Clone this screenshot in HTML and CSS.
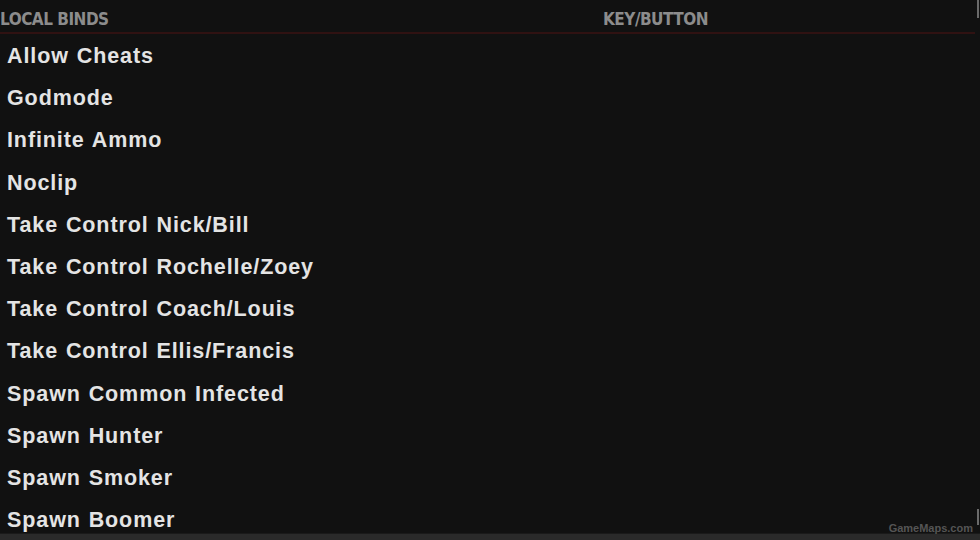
FILE: index.html
```
<!DOCTYPE html>
<html lang="en">
<head>
    <meta charset="UTF-8">
    <title>Local Binds</title>
    <link rel="stylesheet" href="styles.css">
</head>
<body>
    <div class="panel">
        <div class="list">
            <div class="head">
                <span class="col-name">LOCAL BINDS</span>
                <span class="col-key">KEY/BUTTON</span>
            </div>
            <ul class="binds">
                <li>Allow Cheats</li>
                <li>Godmode</li>
                <li>Infinite Ammo</li>
                <li>Noclip</li>
                <li>Take Control Nick/Bill</li>
                <li>Take Control Rochelle/Zoey</li>
                <li>Take Control Coach/Louis</li>
                <li>Take Control Ellis/Francis</li>
                <li>Spawn Common Infected</li>
                <li>Spawn Hunter</li>
                <li>Spawn Smoker</li>
                <li>Spawn Boomer</li>
            </ul>
        </div>
        <div class="scroll">
            <div class="thumb top"></div>
            <div class="thumb bottom"></div>
        </div>
    </div>
    <div class="bottom-bar"></div>
    <div class="watermark">GameMaps.com</div>
</body>
</html>
```
FILE: styles.css
```
body{
    margin: 0;
    width: 980px;
    height: 540px;
    overflow: hidden;
    background: #111111;
    font-family: "Liberation Sans", Arial, sans-serif;
    position: relative;
}
.panel{
    display: flex;
    height: 533px;
}
.list{
    flex: 1;
    overflow: hidden;
}
.head{
    display: flex;
    height: 34px;
    align-items: center;
    border-bottom: 2px solid #301212;
    margin-right: 2px;
    font-family: "DejaVu Sans Condensed", "DejaVu Sans", sans-serif;
    font-weight: bold;
    font-size: 17px;
    letter-spacing: -0.5px;
    color: #8c8c8c;
    padding-top: 5px;
    box-sizing: border-box;
}
.col-name{
    width: 603px;
}
.binds{
    list-style: none;
    margin: 0;
    padding: 1px 0 0 7px;
}
.binds li{
    height: 42.2px;
    line-height: 42px;
    font-size: 21.5px;
    font-weight: bold;
    letter-spacing: 0.9px;
    word-spacing: 1px;
    color: #e4e4e4;
    white-space: nowrap;
}
.scroll{
    width: 3px;
    display: flex;
    flex-direction: column;
    justify-content: space-between;
    padding-bottom: 8px;
}
.thumb{
    width: 2px;
    background: #6a6a6a;
}
.thumb.top{
    height: 18px;
}
.thumb.bottom{
    height: 16px;
}
.bottom-bar{
    height: 7px;
    background: #2a2a2a;
    border-top: 1px solid #1a1a1a;
}
.watermark{
    position: absolute;
    right: 7px;
    bottom: 6px;
    font-size: 11px;
    font-weight: bold;
    color: #555555;
}
```
